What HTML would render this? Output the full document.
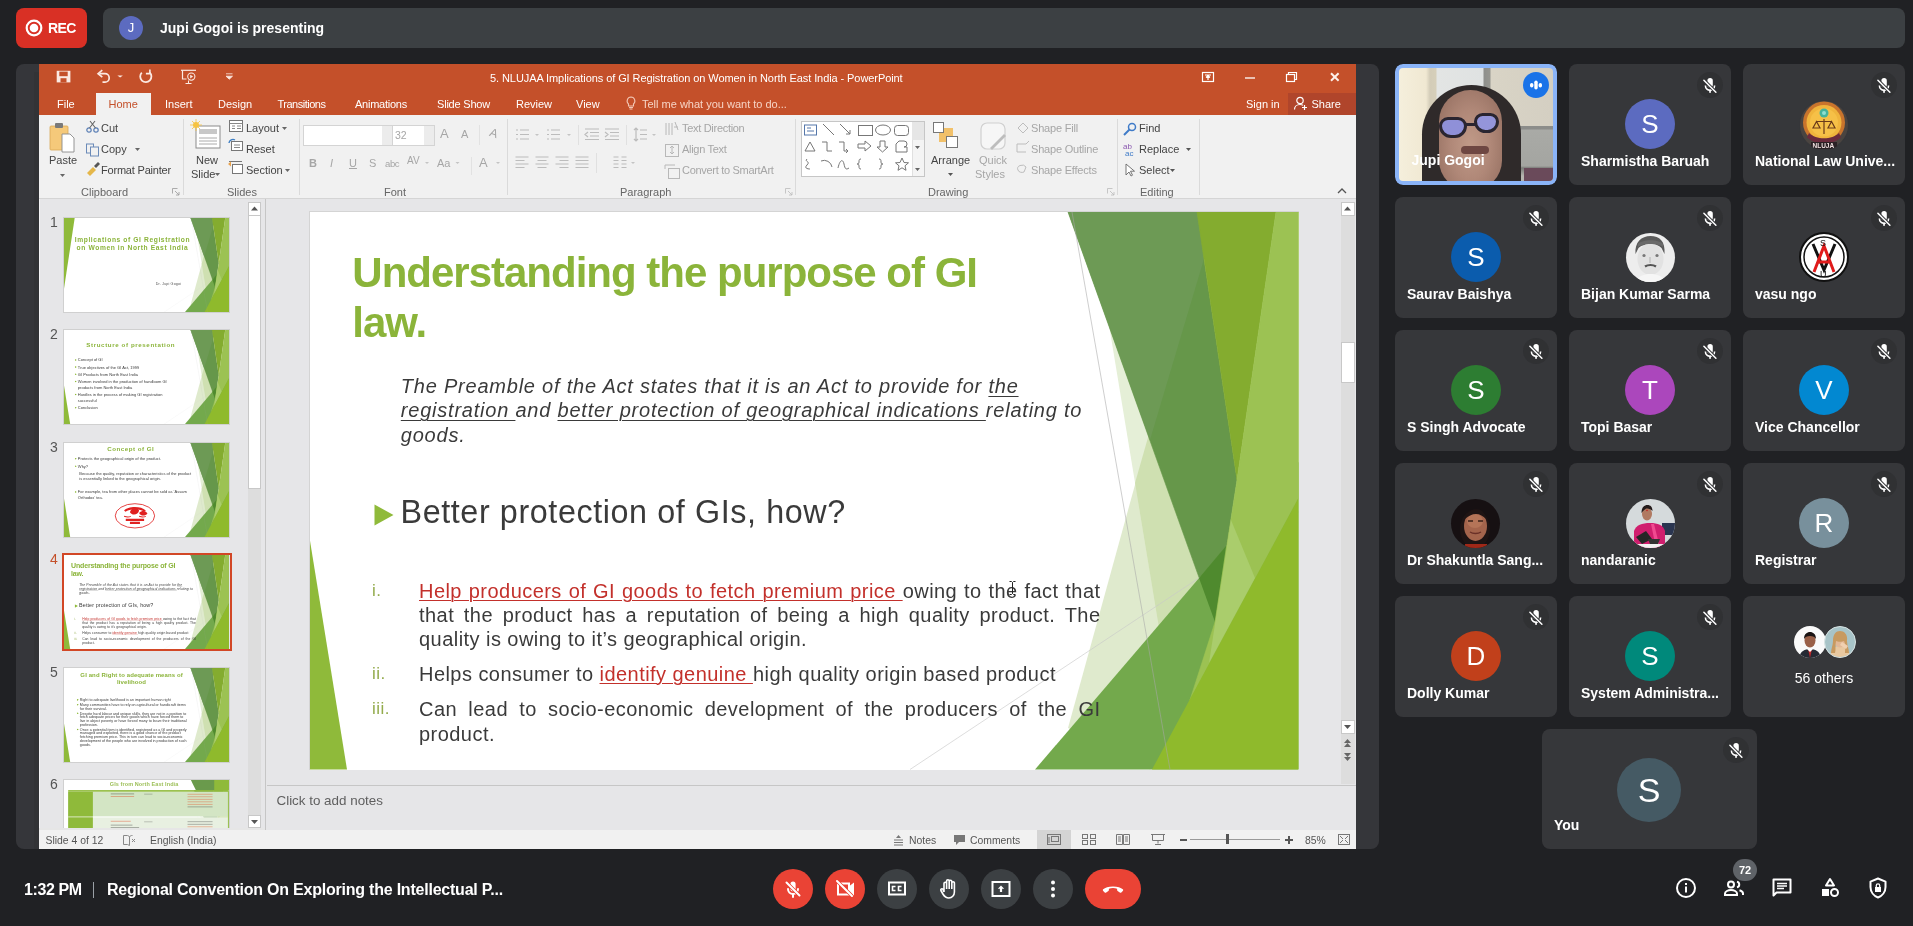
<!DOCTYPE html>
<html><head><meta charset="utf-8">
<style>
*{box-sizing:border-box;margin:0;padding:0}
html,body{width:1913px;height:926px;overflow:hidden;background:#202124;font-family:"Liberation Sans",sans-serif}
body>div,body>svg{will-change:transform}
.a{position:absolute}
#rec{left:16px;top:8px;width:71px;height:40px;background:#d93025;border-radius:8px;color:#fff;font-weight:bold;font-size:14px}
#pres{left:103px;top:8px;width:1802px;height:40px;background:#3c4043;border-radius:8px;color:#fff;font-weight:bold;font-size:14px}
#share{left:16px;top:64px;width:1363px;height:785px;background:#35363a;border-radius:8px;overflow:hidden}
#ppt{left:39px;top:64px;width:1317px;height:785px;background:#e6e6e6;overflow:hidden}
.tile{position:absolute;width:162px;height:121px;background:#36373a;border-radius:8px;overflow:hidden}
.tname{position:absolute;left:12px;bottom:16px;color:#fff;font-weight:bold;font-size:14px;white-space:nowrap}
.av{position:absolute;border-radius:50%;color:#fff;text-align:center;font-size:26px}
.mute{position:absolute;right:8px;top:8px;width:26px;height:26px;border-radius:50%;background:rgba(20,20,22,.18)}

.pt{position:absolute;white-space:nowrap;font-size:11px;color:#fff}
.rt{position:absolute;white-space:nowrap;font-size:11px;color:#444}
.rd{position:absolute;white-space:nowrap;font-size:11px;color:#a6a6a6}
.gl{position:absolute;white-space:nowrap;font-size:11px;color:#666}
.sep{position:absolute;width:1px;background:#dadada}
</style></head>
<body>
<svg width="0" height="0" style="position:absolute">
<defs>
<g id="facetR" stroke-linejoin="round">
 <polygon points="758,516 839,222 930,438 840,557.5" fill="#dfeacd"/>
 <polygon points="799,113 930,438 851,428" fill="#e5efd7"/>
 <polygon points="839,222 825,271 851,428 930,438 890,268" fill="#cfe0b1"/>
 <polygon points="758,0 887,0 927,268 905,410" fill="#66974a" stroke="#66974a" stroke-width="0.6"/>
 <polygon points="758,0 908,0 840,228" fill="#6e9a56" opacity="0.9"/>
 <polygon points="887,0 966,0 927,268" fill="#84ac2f" stroke="#84ac2f" stroke-width="0.6"/>
 <line x1="600" y1="557.5" x2="988.5" y2="300" stroke="#c8c8c8" stroke-width="0.7" opacity="0.9"/>
 <polygon points="725,557.5 988.5,250 988.5,557.5" fill="#73a94c"/>
 <polygon points="889,366 916,334 905,410" fill="#4f8a2e"/>
 <polygon points="966,0 988.5,0 988.5,286 880,488 905,410 927,268" fill="#9cc253" stroke="#9cc253" stroke-width="0.6"/>
 <polygon points="921,308 945,366 899,451" fill="#aacd6c"/>
 <polygon points="842,557.5 988.5,286 988.5,557.5" fill="#8fba2c"/>
 <line x1="762" y1="0" x2="860" y2="557.5" stroke="#a8a8a8" stroke-width="0.7" opacity="0.8"/>
</g>
<g id="facet"><polygon points="0,328.7 0,557.5 37,557.5" fill="#8fba3a"/><use href="#facetR"/></g>
<g id="facet2"><polygon points="0,0 64,0 0,420" fill="#8fba3a"/><use href="#facetR"/></g>
</defs></svg>

<div id="rec" class="a">
 <svg class="a" style="left:9px;top:11px" width="18" height="18" viewBox="0 0 18 18"><circle cx="9" cy="9" r="7.3" fill="none" stroke="#fff" stroke-width="2.2"/><circle cx="9" cy="9" r="4.3" fill="#fff"/></svg>
 <div class="a" style="left:32px;top:12px;font-size:14px;letter-spacing:-0.6px">REC</div>
</div>
<div id="pres" class="a">
 <div class="a" style="left:16px;top:8px;width:24px;height:24px;border-radius:50%;background:#5c6bc0;text-align:center;line-height:24px;font-size:13px;font-weight:normal">J</div>
 <div class="a" style="left:57px;top:12px;font-size:14px">Jupi Gogoi is presenting</div>
</div>
<div id="share" class="a"></div>
<div class="a" style="left:34px;top:72px;width:5px;height:777px;background:#323336"></div>
<div id="ppt" class="a">
<!-- title bar -->
<div class="a" style="left:0;top:0;width:1317px;height:51px;background:#c4502a"></div>
<div class="a" style="left:1249px;top:29px;width:68px;height:22px;background:#b0452b"></div>
<svg class="a" style="left:0;top:0" width="300" height="30" viewBox="0 0 300 30">
 <path d="M17.7 6.8h13.7v11.6H17.7z" fill="#fbe9e2"/><path d="M20.3 7.6h8.4v4.6h-8.4z" fill="#c4502a"/><path d="M21.5 14.2h6v4.2h-6z" fill="#c4502a"/>
 <path d="M60.5 9.7h5.5a4.2 4.2 0 0 1 0 8.4h-2.5" fill="none" stroke="#fbe9e2" stroke-width="1.7"/><path d="M63.3 6.2l-4.2 3.5 4.2 3.5" fill="none" stroke="#fbe9e2" stroke-width="1.7"/>
 <path d="M78.4 11.6h5.5l-2.75 2z" fill="#fbe9e2"/>
 <path d="M110.6 8.4a5.6 5.6 0 1 1-7.8 0.2" fill="none" stroke="#fbe9e2" stroke-width="1.8"/><path d="M110.9 5.6v4h-4" fill="none" stroke="#fbe9e2" stroke-width="1.6"/>
 <path d="M142 6.3h15" stroke="#fbe9e2" stroke-width="1.2"/><path d="M143.5 6.5v8.5h4" fill="none" stroke="#fbe9e2" stroke-width="1.2"/><circle cx="152.3" cy="12.6" r="3.6" fill="none" stroke="#fbe9e2" stroke-width="1.1"/><path d="M151.2 10.8v3.6l2.9-1.8z" fill="#fbe9e2"/><path d="M149.5 16.5v3M146.5 19.5h6" stroke="#fbe9e2" stroke-width="1"/>
 <path d="M187 9.8h6.5M187 12.2h6.5l-3.25 3z" fill="#fbe9e2" stroke="#fbe9e2" stroke-width="0.8"/>
</svg>
<div class="pt" style="left:451px;top:8px;font-size:11px;letter-spacing:-0.08px">5. NLUJAA Implications of GI Registration on Women in North East India - PowerPoint</div>
<svg class="a" style="left:1150px;top:0" width="167" height="30" viewBox="0 0 167 30">
 <g fill="none" stroke="#fff" stroke-width="1.2"><rect x="13.5" y="8.5" width="11" height="9"/><path d="M16 11h6M19 16v-4M17 13.5l2-2 2 2"/></g>
 <path d="M56 14h10" stroke="#fff" stroke-width="1.3"/>
 <g fill="none" stroke="#fff" stroke-width="1.2"><rect x="97.5" y="10.5" width="8" height="7"/><path d="M99.5 10.5v-2h8v7h-2"/></g>
 <path d="M142 9.2l7.6 7.6M149.6 9.2l-7.6 7.6" stroke="#fdf0ea" stroke-width="2"/>
</svg>
<!-- tabs -->
<div class="a" style="left:57px;top:29px;width:55px;height:23px;background:#f1f1f1"></div>
<div class="pt" style="left:18px;top:34px">File</div>
<div class="pt" style="left:69.5px;top:34px;color:#c4502a">Home</div>
<div class="pt" style="left:126px;top:34px">Insert</div>
<div class="pt" style="left:179px;top:34px">Design</div>
<div class="pt" style="left:238.5px;top:34px;letter-spacing:-0.5px">Transitions</div>
<div class="pt" style="left:316px;top:34px;letter-spacing:-0.25px">Animations</div>
<div class="pt" style="left:398px;top:34px;letter-spacing:-0.2px">Slide Show</div>
<div class="pt" style="left:477px;top:34px">Review</div>
<div class="pt" style="left:537px;top:34px">View</div>
<svg class="a" style="left:585px;top:31px" width="14" height="16"><path d="M7 2a4 4 0 0 0-2.5 7v2h5V9A4 4 0 0 0 7 2zM5 12.5h4M5.5 14h3" fill="none" stroke="#f3c6b4" stroke-width="1.1"/></svg>
<div class="pt" style="left:603px;top:34px;color:#f6d3c5;letter-spacing:0px">Tell me what you want to do...</div>
<div class="pt" style="left:1207px;top:34px">Sign in</div>
<svg class="a" style="left:1254px;top:31px" width="16" height="16"><circle cx="7" cy="5.5" r="3.2" fill="none" stroke="#fff" stroke-width="1.2"/><path d="M1.5 14.5c0-3 2.5-5 5.5-5 1.2 0 2.2.3 3 .8M11.5 10v5M9 12.5h5" fill="none" stroke="#fff" stroke-width="1.2"/></svg>
<div class="pt" style="left:1272.5px;top:34px">Share</div>
<!-- ribbon -->
<div class="a" style="left:0;top:51px;width:1317px;height:84px;background:#f1f1f1;border-bottom:1px solid #d5d5d5"></div>
<div id="ribbon" class="a" style="left:0;top:51px;width:1317px;height:84px">
<!-- Clipboard -->
<svg class="a" style="left:8px;top:5px" width="32" height="62" viewBox="0 0 32 62">
 <rect x="3" y="6" width="18" height="24" rx="1" fill="#f5c97a" stroke="#d9a857" stroke-width="0.8"/>
 <rect x="8" y="3" width="8" height="5" rx="1" fill="#7a7a7a"/>
 <path d="M15 14h8l4 4v14H15z" fill="#fff" stroke="#8a8a8a" stroke-width="0.9"/>
 <path d="M13 54h5l-2.5 3z" fill="#666"/>
</svg>
<div class="rt" style="left:10px;top:39px">Paste</div>
<svg class="a" style="left:46px;top:5px" width="16" height="60" viewBox="0 0 16 60">
 <g fill="none" stroke="#5b7fb5" stroke-width="1.2"><circle cx="4" cy="10" r="2.2"/><circle cx="11" cy="10" r="2.2"/></g><path d="M4.5 8L10 1M10.5 8L5 1" stroke="#666" stroke-width="1.1"/>
 <g fill="none" stroke="#6a8ab8" stroke-width="1"><rect x="1.5" y="24" width="7" height="9"/><rect x="5.5" y="27" width="8" height="9" fill="#f1f1f1"/></g>
 <path d="M2 53l6-6 3 3-6 6z" fill="#e5b74a"/><path d="M9 46l4-4 2 2-4 4z" fill="#555"/>
</svg>
<div class="rt" style="left:62px;top:7px">Cut</div>
<div class="rt" style="left:62px;top:28px">Copy</div>
<svg class="a" style="left:96px;top:33px" width="6" height="4"><path d="M0 0h5l-2.5 3z" fill="#666"/></svg>
<div class="rt" style="left:62px;top:49px;letter-spacing:-0.2px">Format Painter</div>
<div class="gl" style="left:42px;top:71px">Clipboard</div>
<svg class="a" style="left:133px;top:73px" width="8" height="8"><path d="M0.5 0.5h5M0.5 0.5v5M3 3l4 4M7 4v3h-3" fill="none" stroke="#999" stroke-width="0.8"/></svg>
<div class="sep" style="left:144px;top:4px;height:76px"></div>
<!-- Slides -->
<svg class="a" style="left:151px;top:4px" width="32" height="34" viewBox="0 0 32 34">
 <rect x="6" y="7" width="24" height="22" fill="#fff" stroke="#8c8c8c"/><rect x="9" y="10" width="18" height="5" fill="#c8c8c8"/><path d="M9 19h18M9 22h18M9 25h18" stroke="#aaa"/>
 <circle cx="6" cy="6" r="3" fill="#f6c343"/><path d="M6 0v12M0 6h12M2 2l8 8M10 2l-8 8" stroke="#f6c343" stroke-width="0.8"/>
</svg>
<div class="rt" style="left:157px;top:39px">New</div>
<div class="rt" style="left:152px;top:53px">Slide</div>
<svg class="a" style="left:176px;top:58px" width="6" height="4"><path d="M0 0h5l-2.5 3z" fill="#666"/></svg>
<svg class="a" style="left:189px;top:3px" width="16" height="60" viewBox="0 0 16 60">
 <rect x="1.5" y="2.5" width="13" height="11" fill="#fff" stroke="#777"/><path d="M1.5 5.5h13M4 8h3M4 10.5h3M9 8h4M9 10.5h4" stroke="#888"/>
 <rect x="3.5" y="23.5" width="11" height="9" fill="#fff" stroke="#777"/><path d="M1 25a4 4 0 0 1 6-3" fill="none" stroke="#3e7fc4" stroke-width="1.4"/><path d="M6 27h6M6 29.5h6" stroke="#888"/>
 <rect x="4.5" y="46.5" width="10" height="9" fill="#fff" stroke="#777"/><path d="M1 43.5h13" stroke="#777"/><path d="M0 46l3-2.5v5z" fill="#e8a04a"/>
</svg>
<div class="rt" style="left:207px;top:7px">Layout</div><svg class="a" style="left:243px;top:12px" width="6" height="4"><path d="M0 0h5l-2.5 3z" fill="#666"/></svg>
<div class="rt" style="left:207px;top:28px">Reset</div>
<div class="rt" style="left:207px;top:49px">Section</div><svg class="a" style="left:246px;top:54px" width="6" height="4"><path d="M0 0h5l-2.5 3z" fill="#666"/></svg>
<div class="gl" style="left:188px;top:71px">Slides</div>
<div class="sep" style="left:260px;top:4px;height:76px"></div>
<!-- Font -->
<div class="a" style="left:264px;top:10px;width:90px;height:21px;background:#fff;border:1px solid #d4d4d4"></div>
<div class="a" style="left:343px;top:11px;width:10px;height:19px;background:#ececec"></div>
<div class="a" style="left:353px;top:10px;width:43px;height:21px;background:#fff;border:1px solid #d4d4d4"></div>
<div class="a" style="left:385px;top:11px;width:10px;height:19px;background:#ececec"></div>
<div class="rd" style="left:356px;top:14px;font-size:10.5px">32</div>
<div class="rd" style="left:401px;top:11px;font-size:13px">A</div><div class="rd" style="left:422px;top:13px;font-size:11px">A</div>
<div class="sep" style="left:440px;top:10px;height:20px;background:#e2e2e2"></div>
<div class="rd" style="left:451px;top:11px;font-size:12px;transform:rotate(20deg)">A</div>
<div class="rd" style="left:270px;top:42px;font-weight:bold;font-size:11px">B</div>
<div class="rd" style="left:291px;top:42px;font-style:italic;font-size:11px">I</div>
<div class="rd" style="left:310px;top:42px;text-decoration:underline;font-size:11px">U</div>
<div class="rd" style="left:330px;top:42px;font-size:11px">S</div>
<div class="rd" style="left:346px;top:43px;font-size:9.5px;letter-spacing:-0.4px">abc</div>
<div class="rd" style="left:368px;top:40px;font-size:10px">AV</div>
<div class="rd" style="left:398px;top:42px;font-size:11px">Aa</div>
<div class="sep" style="left:432px;top:42px;height:18px;background:#e2e2e2"></div>
<div class="rd" style="left:440px;top:40px;font-size:13px">A</div><svg class="a" style="left:386px;top:47px" width="76" height="4"><path d="M0 0h4l-2 2zM30.5 0h4l-2 2zM71 0h4l-2 2z" fill="#c4c4c4"/></svg>
<div class="gl" style="left:345px;top:71px">Font</div>
<div class="sep" style="left:468px;top:4px;height:76px"></div>
<!-- Paragraph -->
<svg class="a" style="left:474px;top:6px" width="160" height="60" viewBox="0 0 160 60" fill="none" stroke="#bcbcbc" stroke-width="1.2">
 <path d="M7 9h9M7 13.5h9M7 18h9M3 9h2M3 13.5h2M3 18h2"/>
 <path d="M38 9h9M38 13.5h9M38 18h9M34 9h2M34 13.5h2M34 18h2"/>
 <path d="M72 8h14M77 11.5h9M77 15h9M72 18.5h14M75 11l-3 2.5 3 2.5"/>
 <path d="M92 8h14M97 11.5h9M97 15h9M92 18.5h14M92 11l3 2.5-3 2.5"/>
 <path d="M123 7v13M121 9l2-2 2 2M121 18l2 2 2-2M127 9h7M127 13.5h7M127 18h7"/>
 <path d="M2.5 36h13M2.5 39.5h9M2.5 43h13M2.5 46.5h9"/>
 <path d="M22.5 36h13M24.5 39.5h9M22.5 43h13M24.5 46.5h9"/>
 <path d="M42.5 36h13M46.5 39.5h9M42.5 43h13M46.5 46.5h9"/>
 <path d="M62.5 36h13M62.5 39.5h13M62.5 43h13M62.5 46.5h13"/>
 <path d="M100.5 36h5M100.5 39.5h5M100.5 43h5M100.5 46.5h5M108.5 36h5M108.5 39.5h5M108.5 43h5M108.5 46.5h5"/>
 <path d="M22 13h4l-2 2zM54 13h4l-2 2zM139 13h4l-2 2zM118 41h4l-2 2z" fill="#c4c4c4" stroke="none"/>
</svg>
<div class="sep" style="left:539px;top:10px;height:20px;background:#e0e0e0"></div>
<div class="sep" style="left:587px;top:10px;height:20px;background:#e0e0e0"></div>
<div class="sep" style="left:557px;top:38px;height:20px;background:#e0e0e0"></div>
<div class="rd" style="left:643px;top:7px;letter-spacing:-0.3px">Text Direction</div>
<div class="rd" style="left:643px;top:28px;letter-spacing:-0.3px">Align Text</div>
<div class="rd" style="left:643px;top:49px;letter-spacing:-0.3px">Convert to SmartArt</div>
<svg class="a" style="left:624px;top:4px" width="18" height="60" fill="none" stroke="#b8b8b8" stroke-width="1">
 <path d="M3 4v12M6 4v12M9 4v12M12 3l3 8M11 8h4"/><rect x="2.5" y="25.5" width="13" height="12"/><path d="M9 27v8M7 29l2-2 2 2M7 33l2 2 2-2"/>
 <rect x="5.5" y="49.5" width="11" height="10"/><path d="M2 46h10M2 46v4"/>
</svg>
<div class="gl" style="left:581px;top:71px">Paragraph</div>
<svg class="a" style="left:746px;top:73px" width="8" height="8"><path d="M0.5 0.5h5M0.5 0.5v5M3 3l4 4M7 4v3h-3" fill="none" stroke="#bbb" stroke-width="0.8"/></svg>
<div class="sep" style="left:756px;top:4px;height:76px"></div>
<!-- Drawing -->
<div class="a" style="left:762px;top:6px;width:124px;height:56px;background:#fff;border:1px solid #c6c6c6"></div>
<div class="a" style="left:873px;top:7px;width:12px;height:54px;background:#f4f4f4;border-left:1px solid #e0e0e0"></div>
<div class="a" style="left:873px;top:7px;width:12px;height:18px;background:#e6e6e6"></div>
<svg class="a" style="left:762px;top:6px" width="124" height="56" viewBox="0 0 124 56" fill="none" stroke="#777" stroke-width="1">
 <rect x="3.5" y="4" width="12" height="10" stroke="#5577aa"/><path d="M6 7h4M6 10h7" stroke="#5577aa"/>
 <path d="M22 3l11 11M39 3l10 10M49 13v-4M49 13h-4"/>
 <rect x="57.5" y="4.5" width="14" height="10"/><ellipse cx="82" cy="9" rx="7.5" ry="5"/><rect x="93.5" y="4.5" width="14" height="10" rx="3"/>
 <path d="M4 30l5-9 5 9z"/><path d="M21 21h5v9h5"/><path d="M38 21h5v9h4M45 28l2 2-2 2"/>
 <path d="M57 23h7v-3l6 5-6 5v-3h-7z"/><path d="M79 20h5v6h3l-5.5 5-5.5-5h3z"/><path d="M95 31v-8l3-3h5a3 3 0 0 1 0 6h3v5z"/>
 <path d="M6 38c-3 3 4 2 0 6s3 4 3 4"/><path d="M20 40a8 8 0 0 1 11 6"/><path d="M37 47c2-9 5-9 6-4s2 6 5 4"/>
 <path d="M60 38c-2 0-2 1-2 3s-1 2-2 2c1 0 2 0 2 2s0 3 2 3"/><path d="M78 38c2 0 2 1 2 3s1 2 2 2c-1 0-2 0-2 2s0 3-2 3"/>
 <path d="M101 37l2 4.5 4.5.3-3.5 3 1 4.5-4-2.5-4 2.5 1-4.5-3.5-3 4.5-.3z"/>
 <path d="M114 25h5l-2.5 3zM114 45h5M114 47h5l-2.5 3z" fill="#666" stroke="none"/>
</svg>
<svg class="a" style="left:891px;top:5px" width="34" height="34" viewBox="0 0 34 34">
 <rect x="9" y="8" width="14" height="14" fill="#f2c16a"/><rect x="3.5" y="2.5" width="10" height="10" fill="#fff" stroke="#777"/><rect x="16.5" y="16.5" width="11" height="11" fill="#fff" stroke="#777"/>
</svg>
<div class="rt" style="left:892px;top:39px">Arrange</div>
<svg class="a" style="left:909px;top:58px" width="6" height="4"><path d="M0 0h5l-2.5 3z" fill="#555"/></svg>
<svg class="a" style="left:939px;top:5px" width="32" height="34" viewBox="0 0 32 34"><rect x="3" y="3" width="24" height="26" rx="6" fill="#f6f6f6" stroke="#d0d0d0" stroke-width="1.2"/><path d="M12 28l14-14 2 2-14 14z" fill="#bdbdbd"/></svg>
<div class="rd" style="left:940px;top:39px">Quick</div>
<div class="rd" style="left:936px;top:53px">Styles</div>
<svg class="a" style="left:975px;top:3px" width="18" height="62" fill="none" stroke="#bdbdbd" stroke-width="1">
 <path d="M4 10l5-5 5 5-5 5z"/><path d="M3 26h9l3-3M3 26v8h9" /><path d="M4 52a4 3 0 0 1 8-3l-2 5a4 3 0 0 1-6-2z"/>
</svg>
<div class="rd" style="left:992px;top:7px;letter-spacing:-0.2px">Shape Fill</div>
<div class="rd" style="left:992px;top:28px;letter-spacing:-0.2px">Shape Outline</div>
<div class="rd" style="left:992px;top:49px;letter-spacing:-0.2px">Shape Effects</div>
<div class="gl" style="left:889px;top:71px">Drawing</div>
<svg class="a" style="left:1068px;top:73px" width="8" height="8"><path d="M0.5 0.5h5M0.5 0.5v5M3 3l4 4M7 4v3h-3" fill="none" stroke="#bbb" stroke-width="0.8"/></svg>
<div class="sep" style="left:1078px;top:4px;height:76px"></div>
<!-- Editing -->
<svg class="a" style="left:1082px;top:5px" width="18" height="60" viewBox="0 0 18 60">
 <circle cx="11" cy="7" r="3.5" fill="none" stroke="#3f7bc8" stroke-width="1.5"/><path d="M8.5 9.5L3 15" stroke="#3f7bc8" stroke-width="2"/>
 <text x="2" y="29" font-size="8" fill="#8a58b0" font-family="Liberation Sans">ab</text><text x="4" y="36" font-size="8" fill="#3f7bc8" font-family="Liberation Sans">ac</text>
 <path d="M5 44v11l3-3 2 4 1.5-.8-2-4h4z" fill="#fff" stroke="#666" stroke-width="0.9"/>
</svg>
<div class="rt" style="left:1100px;top:7px">Find</div>
<div class="rt" style="left:1100px;top:28px">Replace</div><svg class="a" style="left:1147px;top:33px" width="6" height="4"><path d="M0 0h5l-2.5 3z" fill="#555"/></svg>
<div class="rt" style="left:1100px;top:49px">Select</div><svg class="a" style="left:1131px;top:54px" width="6" height="4"><path d="M0 0h5l-2.5 3z" fill="#555"/></svg>
<div class="gl" style="left:1101px;top:71px">Editing</div>
<div class="sep" style="left:1160px;top:4px;height:76px"></div>
<svg class="a" style="left:1298px;top:72px" width="10" height="8"><path d="M1 6l4-4 4 4" fill="none" stroke="#555" stroke-width="1.3"/></svg>
</div>

<!-- main area -->
<div class="a" style="left:0;top:135px;width:1317px;height:631px;background:#e6e6e8"></div>
<div class="a" style="left:226px;top:135px;width:1px;height:631px;background:#c6c6c6"></div><div class="a" style="left:0;top:135px;width:1px;height:631px;background:#f3f3f5"></div>
<!-- thumbnail scrollbar -->
<div class="a" style="left:209px;top:138px;width:13px;height:626px;background:#dddddd"></div>
<div class="a" style="left:209px;top:138px;width:13px;height:14px;background:#fff;border:1px solid #c8c8c8"></div>
<svg class="a" style="left:212px;top:142px" width="8" height="5"><path d="M0 4.5h7l-3.5-4z" fill="#555"/></svg>
<div class="a" style="left:209px;top:152px;width:13px;height:273px;background:#fff;border:1px solid #c8c8c8;border-top:none"></div>
<div class="a" style="left:209px;top:751px;width:13px;height:13px;background:#fff;border:1px solid #c8c8c8"></div>
<svg class="a" style="left:212px;top:756px" width="8" height="5"><path d="M0 0h7l-3.5 4z" fill="#555"/></svg>
<!-- thumbs -->
<div id="thumbs"><div class="rt" style="left:11px;top:150px;font-size:14px;color:#555">1</div><div class="a" style="left:24px;top:153px;width:167px;height:96px;background:#d0d0d0"></div><div class="a" style="left:25px;top:154px;width:165px;height:94px;overflow:hidden;background:#fff"><div class="a" style="left:0;top:0;width:988.5px;height:557.5px;transform:scale(0.16692,0.16861);transform-origin:0 0"><svg class="a" style="left:0;top:0" width="988.5" height="557.5" viewBox="0 0 988.5 557.5"><use href="#facet2"/></svg><div class="a" style="left:20px;top:101px;width:780px;text-align:center;font-size:40px;font-weight:bold;color:#8bb43a;line-height:50px;white-space:nowrap;letter-spacing:3.6px">Implications of GI Registration<br>on Women in North East India</div><div class="a" style="left:549px;top:380px;font-size:22px;color:#555;white-space:nowrap;letter-spacing:1px">Dr. Jupi Gogoi</div></div></div><div class="rt" style="left:11px;top:262px;font-size:14px;color:#555">2</div><div class="a" style="left:24px;top:265px;width:167px;height:96px;background:#d0d0d0"></div><div class="a" style="left:25px;top:266px;width:165px;height:94px;overflow:hidden;background:#fff"><div class="a" style="left:0;top:0;width:988.5px;height:557.5px;transform:scale(0.16692,0.16861);transform-origin:0 0"><svg class="a" style="left:0;top:0" width="988.5" height="557.5" viewBox="0 0 988.5 557.5"><use href="#facet"/></svg><div class="a" style="left:100px;top:70px;width:600px;text-align:center;font-size:37px;font-weight:bold;color:#8bb43a;white-space:nowrap;letter-spacing:3.6px">Structure of presentation</div><svg class="a" style="left:65px;top:171.75px" width="12" height="12"><path d="M0 0L12 6L0 12z" fill="#8fba3a"/></svg><div class="a" style="left:83px;top:160px;width:590px;font-size:24px;line-height:35.5px;color:#3a3a3a">Concept of GI</div><svg class="a" style="left:65px;top:214.25px" width="12" height="12"><path d="M0 0L12 6L0 12z" fill="#8fba3a"/></svg><div class="a" style="left:83px;top:202.5px;width:590px;font-size:24px;line-height:35.5px;color:#3a3a3a">True objectives of the GI Act, 1999</div><svg class="a" style="left:65px;top:256.75px" width="12" height="12"><path d="M0 0L12 6L0 12z" fill="#8fba3a"/></svg><div class="a" style="left:83px;top:245.0px;width:590px;font-size:24px;line-height:35.5px;color:#3a3a3a">GI Products from North East India</div><svg class="a" style="left:65px;top:299.25px" width="12" height="12"><path d="M0 0L12 6L0 12z" fill="#8fba3a"/></svg><div class="a" style="left:83px;top:287.5px;width:590px;font-size:24px;line-height:35.5px;color:#3a3a3a">Women involved in the production of handloom GI products from North East India</div><svg class="a" style="left:65px;top:377.25px" width="12" height="12"><path d="M0 0L12 6L0 12z" fill="#8fba3a"/></svg><div class="a" style="left:83px;top:365.5px;width:590px;font-size:24px;line-height:35.5px;color:#3a3a3a">Hurdles in the process of making GI registration successful</div><svg class="a" style="left:65px;top:455.25px" width="12" height="12"><path d="M0 0L12 6L0 12z" fill="#8fba3a"/></svg><div class="a" style="left:83px;top:443.5px;width:590px;font-size:24px;line-height:35.5px;color:#3a3a3a">Conclusion</div></div></div><div class="rt" style="left:11px;top:374.5px;font-size:14px;color:#555">3</div><div class="a" style="left:24px;top:377.5px;width:167px;height:96px;background:#d0d0d0"></div><div class="a" style="left:25px;top:378.5px;width:165px;height:94px;overflow:hidden;background:#fff"><div class="a" style="left:0;top:0;width:988.5px;height:557.5px;transform:scale(0.16692,0.16861);transform-origin:0 0"><svg class="a" style="left:0;top:0" width="988.5" height="557.5" viewBox="0 0 988.5 557.5"><use href="#facet"/></svg><div class="a" style="left:150px;top:14px;width:500px;text-align:center;font-size:37px;font-weight:bold;color:#8bb43a;white-space:nowrap;letter-spacing:3px">Concept of GI</div><svg class="a" style="left:65px;top:87.0px" width="12" height="12"><path d="M0 0L12 6L0 12z" fill="#8fba3a"/></svg><div class="a" style="left:83px;top:76px;width:680px;font-size:24px;line-height:34px;color:#3a3a3a">Protects the geographical origin of the product.</div><svg class="a" style="left:65px;top:132.0px" width="12" height="12"><path d="M0 0L12 6L0 12z" fill="#8fba3a"/></svg><div class="a" style="left:83px;top:121px;width:680px;font-size:24px;line-height:34px;color:#3a3a3a">Why?</div><div class="a" style="left:92px;top:163px;width:680px;font-size:24px;line-height:33.5px;color:#3a3a3a">Because the quality, reputation or characteristics of the product is essentially linked to the geographical origin.</div><svg class="a" style="left:65px;top:284.0px" width="12" height="12"><path d="M0 0L12 6L0 12z" fill="#8fba3a"/></svg><div class="a" style="left:83px;top:273px;width:680px;font-size:24px;line-height:34px;color:#3a3a3a">For example, tea from other places cannot be sold as ‘Assam Orthodox’ tea.</div><svg class="a" style="left:300px;top:355px" width="250" height="155" viewBox="0 0 250 155"><ellipse cx="125" cy="77" rx="118" ry="72" fill="#fff" stroke="#e02020" stroke-width="5"/><path d="M60 45c20-25 100-30 130 0l-8 8c-25-20-90-20-114 0z" fill="#e02020"/><path d="M95 55c10-30 40-30 55-10c-5 25-40 35-55 10z" fill="#e02020"/><path d="M150 60c20-20 45-10 50 5c-15 15-40 15-50-5z" fill="#e02020"/><path d="M70 95h110v12H70zM95 112h60v14H95z" fill="#e02020"/><path d="M60 80c15 5 30 5 40 0M150 80c15 5 30 5 40 0" stroke="#e02020" stroke-width="6" fill="none"/></svg></div></div><div class="rt" style="left:11px;top:487px;font-size:14px;color:#c4502a">4</div><div class="a" style="left:22.7px;top:489px;width:170.3px;height:98.4px;border:2.5px solid #d24726"></div><div class="a" style="left:25px;top:491px;width:165px;height:94px;overflow:hidden;background:#fff"><div class="a" style="left:0;top:0;width:988.5px;height:557.5px;transform:scale(0.16692,0.16861);transform-origin:0 0"><svg class="a" style="left:0;top:0" width="988.5" height="557.5" viewBox="0 0 988.5 557.5"><use href="#facet"/></svg><div style="position:absolute;left:42.3px;font-size:42px;font-weight:bold;color:#8bb43a;line-height:50px;white-space:nowrap;letter-spacing:-1.0px;top:36.2px">Understanding the purpose of GI</div><div style="position:absolute;left:42.3px;font-size:42px;font-weight:bold;color:#8bb43a;line-height:50px;white-space:nowrap;letter-spacing:-1.0px;top:85.5px">law.</div><div style="position:absolute;left:90.8px;font-size:20px;font-style:italic;color:#3a3a3a;line-height:24px;white-space:nowrap;letter-spacing:0.78px;top:161.72px">The Preamble of the Act states that it is an Act to provide for <span style="text-decoration:underline;text-underline-offset:3px;text-decoration-thickness:1px">the</span></div><div style="position:absolute;left:90.8px;font-size:20px;font-style:italic;color:#3a3a3a;line-height:24px;white-space:nowrap;letter-spacing:0.78px;top:186.22px"><span style="text-decoration:underline;text-underline-offset:3px;text-decoration-thickness:1px">registration </span>and <span style="text-decoration:underline;text-underline-offset:3px;text-decoration-thickness:1px">better protection of geographical indications </span>relating to</div><div style="position:absolute;left:90.8px;font-size:20px;font-style:italic;color:#3a3a3a;line-height:24px;white-space:nowrap;letter-spacing:0.78px;top:210.82px">goods.</div><svg class="a" style="left:64px;top:291.5px" width="20" height="22"><path d="M0.5 0.5L19.5 11L0.5 21.5z" fill="#8fba3a"/></svg><div class="a" style="left:90.5px;top:282.4px;font-size:32.3px;color:#3a3a3a;line-height:36px;white-space:nowrap;letter-spacing:0.6px">Better protection of GIs, how?</div><div class="a" style="left:62px;top:366.80px;font-size:17px;line-height:24px;color:#93ab4c;letter-spacing:0.5px">i.</div><div style="position:absolute;left:109px;width:681.5px;font-size:20px;line-height:24px;white-space:nowrap;letter-spacing:0.455px;color:#3a3a3a;top:366.80px;text-align:justify;text-align-last:justify;white-space:normal"><span style="color:#c3302b;text-decoration:underline;text-underline-offset:2px;text-decoration-thickness:1px">Help producers of GI goods to fetch premium price </span>owing to the fact that</div><div style="position:absolute;left:109px;width:681.5px;font-size:20px;line-height:24px;white-space:nowrap;letter-spacing:0.455px;color:#3a3a3a;top:390.80px;text-align:justify;text-align-last:justify;white-space:normal">that the product has a reputation of being a high quality product. The</div><div style="position:absolute;left:109px;width:681.5px;font-size:20px;line-height:24px;white-space:nowrap;letter-spacing:0.455px;color:#3a3a3a;top:414.90px;">quality is owing to it’s geographical origin.</div><div class="a" style="left:62px;top:450.20px;font-size:17px;line-height:24px;color:#93ab4c;letter-spacing:0.5px">ii.</div><div style="position:absolute;left:109px;width:681.5px;font-size:20px;line-height:24px;white-space:nowrap;letter-spacing:0.455px;color:#3a3a3a;top:450.20px;">Helps consumer to <span style="color:#c3302b;text-decoration:underline;text-underline-offset:2px;text-decoration-thickness:1px">identify genuine </span>high quality origin based product</div><div class="a" style="left:62px;top:485.30px;font-size:17px;line-height:24px;color:#93ab4c;letter-spacing:0.5px">iii.</div><div style="position:absolute;left:109px;width:681.5px;font-size:20px;line-height:24px;white-space:nowrap;letter-spacing:0.455px;color:#3a3a3a;top:485.30px;text-align:justify;text-align-last:justify;white-space:normal">Can lead to socio-economic development of the producers of the GI</div><div style="position:absolute;left:109px;width:681.5px;font-size:20px;line-height:24px;white-space:nowrap;letter-spacing:0.455px;color:#3a3a3a;top:509.80px;">product.</div><svg class="a" style="left:699px;top:369px" width="7" height="14"><path d="M0.5 0.5h2l1 1 1-1h2M3.5 1.5v11M0.5 13.5h2l1-1 1 1h2" fill="none" stroke="#222" stroke-width="1"/></svg></div></div><div class="rt" style="left:11px;top:599.5px;font-size:14px;color:#555">5</div><div class="a" style="left:24px;top:602.5px;width:167px;height:96px;background:#d0d0d0"></div><div class="a" style="left:25px;top:603.5px;width:165px;height:94px;overflow:hidden;background:#fff"><div class="a" style="left:0;top:0;width:988.5px;height:557.5px;transform:scale(0.16692,0.16861);transform-origin:0 0"><svg class="a" style="left:0;top:0" width="988.5" height="557.5" viewBox="0 0 988.5 557.5"><use href="#facet"/></svg><div class="a" style="left:60px;top:16px;width:690px;text-align:center;font-size:36px;font-weight:bold;color:#8bb43a;line-height:45px;letter-spacing:0.6px">GI and Right to adequate means of livelihood</div><svg class="a" style="left:77px;top:183.25px" width="12" height="12"><path d="M0 0L12 6L0 12z" fill="#8fba3a"/></svg><div class="a" style="left:95px;top:178px;width:640px;font-size:22px;line-height:22.5px;color:#3a3a3a">Right to adequate livelihood is an important human right</div><svg class="a" style="left:77px;top:211.75px" width="12" height="12"><path d="M0 0L12 6L0 12z" fill="#8fba3a"/></svg><div class="a" style="left:95px;top:206.5px;width:640px;font-size:22px;line-height:22.5px;color:#3a3a3a">Many communities have to rely on agricultural or handicraft items for their survival.</div><svg class="a" style="left:77px;top:262.75px" width="12" height="12"><path d="M0 0L12 6L0 12z" fill="#8fba3a"/></svg><div class="a" style="left:95px;top:257.5px;width:640px;font-size:22px;line-height:22.5px;color:#3a3a3a">Despite hard labour and unique skills, they are not in a position to fetch adequate prices for their goods which have forced them to live in abject poverty or have forced many to leave their traditional profession.</div><svg class="a" style="left:77px;top:358.75px" width="12" height="12"><path d="M0 0L12 6L0 12z" fill="#8fba3a"/></svg><div class="a" style="left:95px;top:353.5px;width:640px;font-size:22px;line-height:22.5px;color:#3a3a3a">Once a potential item is identified, registered as a GI and properly managed and exploited, there is a good chance of the product fetching premium price. This in turn can lead to socio-economic development of the people who are involved in production of such goods.</div></div></div><div class="rt" style="left:11px;top:712px;font-size:14px;color:#555">6</div><div class="a" style="left:24px;top:715px;width:167px;height:96px;background:#d0d0d0"></div><div class="a" style="left:25px;top:716px;width:165px;height:94px;overflow:hidden;background:#fff"><div class="a" style="left:0;top:0;width:988.5px;height:557.5px;transform:scale(0.16692,0.16861);transform-origin:0 0"><svg class="a" style="left:0;top:0" width="988.5" height="557.5" viewBox="0 0 988.5 557.5"><use href="#facet"/></svg><div class="a" style="left:0;top:0;width:988.5px;height:60px;background:#fff"></div><svg class="a" style="left:0;top:0" width="988.5" height="60"><polygon points="760,0 988.5,0 988.5,60 790,60" fill="#6a9a4c"/><polygon points="900,0 988.5,0 988.5,60 900,60" fill="#8fba3a"/></svg><div class="a" style="left:230px;top:8px;width:500px;text-align:center;font-size:33px;font-weight:bold;color:#8bb43a;letter-spacing:0.5px;opacity:.85">GIs from North East India</div><div class="a" style="left:25px;top:60px;width:957px;height:10px;background:#8fba3a"></div><div class="a" style="left:25px;top:70px;width:957px;height:147px;background:#d3e5c4"></div><div class="a" style="left:25px;top:221px;width:957px;height:340px;background:#e8f0e1"></div><div class="a" style="left:25px;top:70px;width:148px;height:490px;background:#8fba3a"></div><div class="a" style="left:25px;top:217px;width:957px;height:4px;background:#fff"></div><div class="a" style="left:280px;top:80px;width:140px;height:5px;background:#333;opacity:.45"></div><div class="a" style="left:280px;top:95px;width:140px;height:5px;background:#e0401a;opacity:.45"></div><div class="a" style="left:280px;top:242px;width:120px;height:5px;background:#e0401a;opacity:.45"></div><div class="a" style="left:280px;top:265px;width:130px;height:5px;background:#333;opacity:.45"></div><div class="a" style="left:280px;top:280px;width:170px;height:5px;background:#333;opacity:.45"></div><div class="a" style="left:280px;top:295px;width:100px;height:5px;background:#333;opacity:.45"></div><div class="a" style="left:740px;top:82px;width:150px;height:5px;background:#e0401a;opacity:.4"></div><div class="a" style="left:740px;top:97px;width:150px;height:5px;background:#e0401a;opacity:.4"></div><div class="a" style="left:740px;top:112px;width:150px;height:5px;background:#e0401a;opacity:.4"></div><div class="a" style="left:740px;top:127px;width:150px;height:5px;background:#e0401a;opacity:.4"></div><div class="a" style="left:740px;top:142px;width:150px;height:5px;background:#e0401a;opacity:.4"></div><div class="a" style="left:740px;top:157px;width:150px;height:5px;background:#333;opacity:.4"></div><div class="a" style="left:740px;top:245px;width:150px;height:5px;background:#333;opacity:.4"></div><div class="a" style="left:740px;top:260px;width:150px;height:5px;background:#333;opacity:.4"></div><div class="a" style="left:740px;top:275px;width:150px;height:5px;background:#e0401a;opacity:.4"></div><div class="a" style="left:740px;top:290px;width:150px;height:5px;background:#333;opacity:.4"></div><div class="a" style="left:480px;top:82px;width:50px;height:3px;background:#333;opacity:.5"></div><div class="a" style="left:480px;top:247px;width:50px;height:3px;background:#333;opacity:.5"></div></div></div><div class="a" style="left:0;top:764px;width:226px;height:2px;background:#e6e6e6"></div></div>
<!-- slide area scrollbar -->
<div class="a" style="left:1302px;top:138px;width:14px;height:582px;background:#dddddd"></div>
<div class="a" style="left:1302px;top:138px;width:14px;height:14px;background:#fff;border:1px solid #c8c8c8"></div>
<svg class="a" style="left:1305px;top:142px" width="8" height="5"><path d="M0 4.5h7l-3.5-4z" fill="#555"/></svg>
<div class="a" style="left:1302px;top:278px;width:14px;height:41px;background:#fff;border:1px solid #c8c8c8"></div>
<div class="a" style="left:1302px;top:656px;width:14px;height:14px;background:#fff;border:1px solid #c8c8c8"></div>
<svg class="a" style="left:1305px;top:661px" width="8" height="5"><path d="M0 0h7l-3.5 4z" fill="#555"/></svg>
<svg class="a" style="left:1305px;top:674px" width="8" height="24"><path d="M0 5h7l-3.5-4zM0 9h7l-3.5-4z" fill="#666"/><path d="M0 15h7l-3.5 4zM0 19h7l-3.5 4z" fill="#666"/></svg>
<!-- slide -->
<div class="a" style="left:270px;top:147px;width:990px;height:559px;background:#d4d4d4"></div>
<div id="slide" class="a" style="left:271px;top:148px;width:988.5px;height:557.5px;background:#fff;overflow:hidden">
 <!--S4--><svg class="a" style="left:0;top:0" width="988.5" height="557.5" viewBox="0 0 988.5 557.5"><use href="#facet"/></svg><div style="position:absolute;left:42.3px;font-size:42px;font-weight:bold;color:#8bb43a;line-height:50px;white-space:nowrap;letter-spacing:-1.0px;top:36.2px">Understanding the purpose of GI</div><div style="position:absolute;left:42.3px;font-size:42px;font-weight:bold;color:#8bb43a;line-height:50px;white-space:nowrap;letter-spacing:-1.0px;top:85.5px">law.</div><div style="position:absolute;left:90.8px;font-size:20px;font-style:italic;color:#3a3a3a;line-height:24px;white-space:nowrap;letter-spacing:0.78px;top:161.72px">The Preamble of the Act states that it is an Act to provide for <span style="text-decoration:underline;text-underline-offset:3px;text-decoration-thickness:1px">the</span></div><div style="position:absolute;left:90.8px;font-size:20px;font-style:italic;color:#3a3a3a;line-height:24px;white-space:nowrap;letter-spacing:0.78px;top:186.22px"><span style="text-decoration:underline;text-underline-offset:3px;text-decoration-thickness:1px">registration </span>and <span style="text-decoration:underline;text-underline-offset:3px;text-decoration-thickness:1px">better protection of geographical indications </span>relating to</div><div style="position:absolute;left:90.8px;font-size:20px;font-style:italic;color:#3a3a3a;line-height:24px;white-space:nowrap;letter-spacing:0.78px;top:210.82px">goods.</div><svg class="a" style="left:64px;top:291.5px" width="20" height="22"><path d="M0.5 0.5L19.5 11L0.5 21.5z" fill="#8fba3a"/></svg><div class="a" style="left:90.5px;top:282.4px;font-size:32.3px;color:#3a3a3a;line-height:36px;white-space:nowrap;letter-spacing:0.6px">Better protection of GIs, how?</div><div class="a" style="left:62px;top:366.80px;font-size:17px;line-height:24px;color:#93ab4c;letter-spacing:0.5px">i.</div><div style="position:absolute;left:109px;width:681.5px;font-size:20px;line-height:24px;white-space:nowrap;letter-spacing:0.455px;color:#3a3a3a;top:366.80px;text-align:justify;text-align-last:justify;white-space:normal"><span style="color:#c3302b;text-decoration:underline;text-underline-offset:2px;text-decoration-thickness:1px">Help producers of GI goods to fetch premium price </span>owing to the fact that</div><div style="position:absolute;left:109px;width:681.5px;font-size:20px;line-height:24px;white-space:nowrap;letter-spacing:0.455px;color:#3a3a3a;top:390.80px;text-align:justify;text-align-last:justify;white-space:normal">that the product has a reputation of being a high quality product. The</div><div style="position:absolute;left:109px;width:681.5px;font-size:20px;line-height:24px;white-space:nowrap;letter-spacing:0.455px;color:#3a3a3a;top:414.90px;">quality is owing to it’s geographical origin.</div><div class="a" style="left:62px;top:450.20px;font-size:17px;line-height:24px;color:#93ab4c;letter-spacing:0.5px">ii.</div><div style="position:absolute;left:109px;width:681.5px;font-size:20px;line-height:24px;white-space:nowrap;letter-spacing:0.455px;color:#3a3a3a;top:450.20px;">Helps consumer to <span style="color:#c3302b;text-decoration:underline;text-underline-offset:2px;text-decoration-thickness:1px">identify genuine </span>high quality origin based product</div><div class="a" style="left:62px;top:485.30px;font-size:17px;line-height:24px;color:#93ab4c;letter-spacing:0.5px">iii.</div><div style="position:absolute;left:109px;width:681.5px;font-size:20px;line-height:24px;white-space:nowrap;letter-spacing:0.455px;color:#3a3a3a;top:485.30px;text-align:justify;text-align-last:justify;white-space:normal">Can lead to socio-economic development of the producers of the GI</div><div style="position:absolute;left:109px;width:681.5px;font-size:20px;line-height:24px;white-space:nowrap;letter-spacing:0.455px;color:#3a3a3a;top:509.80px;">product.</div><svg class="a" style="left:699px;top:369px" width="7" height="14"><path d="M0.5 0.5h2l1 1 1-1h2M3.5 1.5v11M0.5 13.5h2l1-1 1 1h2" fill="none" stroke="#222" stroke-width="1"/></svg><!--/S4-->
</div>
<!-- notes -->
<div class="a" style="left:228px;top:721px;width:1089px;height:1px;background:#c6c6c6"></div>
<div class="rt" style="left:237.5px;top:728.8px;font-size:13.4px;color:#5f5f5f">Click to add notes</div>
<!-- status bar -->
<div class="a" style="left:0;top:766px;width:1317px;height:19px;background:#f1f1f1"></div>
<div class="rt" style="left:6.5px;top:770.5px;color:#555;font-size:10.4px">Slide 4 of 12</div>
<svg class="a" style="left:83px;top:769px" width="14" height="13" fill="none" stroke="#888" stroke-width="1"><path d="M1.5 2.5h4l2 1v9l-2-1h-4zM7.5 3.5l2-1h1M10 6l3 3M13 6l-3 3"/></svg><div class="rt" style="left:111px;top:770.5px;color:#555;font-size:10.4px">English (India)</div>
<!-- status bar right -->
<svg class="a" style="left:853px;top:770px" width="14" height="12"><path d="M2 6h9M2 8.5h9M2 11h9" stroke="#777" stroke-width="1"/><path d="M4 4l2.5-3 2.5 3z" fill="#777"/></svg>
<div class="rt" style="left:870px;top:770.5px;color:#555;font-size:10.4px">Notes</div>
<svg class="a" style="left:914px;top:770px" width="14" height="12"><path d="M1 1h11v7H6l-3 3V8H1z" fill="#777"/></svg>
<div class="rt" style="left:931px;top:770.5px;color:#555;font-size:10.4px">Comments</div>
<div class="a" style="left:998px;top:766px;width:34px;height:19px;background:#d4d4d4"></div>
<svg class="a" style="left:1007px;top:769px" width="16" height="13" fill="none" stroke="#777" stroke-width="1"><rect x="1.5" y="1.5" width="13" height="10"/><rect x="5.5" y="3.5" width="7" height="5"/><path d="M3 4v6"/></svg>
<svg class="a" style="left:1042px;top:769px" width="16" height="13" fill="none" stroke="#777" stroke-width="1"><rect x="1.5" y="1.5" width="5" height="4"/><rect x="9.5" y="1.5" width="5" height="4"/><rect x="1.5" y="7.5" width="5" height="4"/><rect x="9.5" y="7.5" width="5" height="4"/></svg>
<svg class="a" style="left:1076px;top:769px" width="16" height="13" fill="none" stroke="#777" stroke-width="1"><path d="M1.5 1.5h6v10h-6zM8.5 1.5h6v10h-6zM3 4h3M3 6h3M3 8h3M10 4h3M10 6h3M10 8h3"/></svg>
<svg class="a" style="left:1111px;top:769px" width="16" height="13" fill="none" stroke="#777" stroke-width="1"><path d="M1 1.5h14M2.5 1.5v6h11v-6M8 7.5v3M5 11.5h6"/></svg>
<div class="a" style="left:1141px;top:775px;width:7px;height:1.5px;background:#555"></div>
<div class="a" style="left:1151px;top:775px;width:90px;height:1px;background:#999"></div>
<div class="a" style="left:1187px;top:770px;width:3px;height:10px;background:#555"></div>
<div class="a" style="left:1246px;top:775px;width:8px;height:1.5px;background:#555"></div>
<div class="a" style="left:1249.3px;top:771.5px;width:1.5px;height:8px;background:#555"></div>
<div class="rt" style="left:1266px;top:770.5px;color:#555;font-size:10.4px">85%</div>
<svg class="a" style="left:1298px;top:769px" width="14" height="13" fill="none" stroke="#777" stroke-width="1"><rect x="1.5" y="1.5" width="11" height="10"/><path d="M3 3l3 3M11 3l-3 3M3 10l3-3M11 10l-3-3"/></svg>

</div>

<div class="tile" style="left:1395px;top:64px"><div class="a" style="left:0;top:0;width:162px;height:121px;border-radius:8px;background:#8ab4f8"></div>
<div class="a" style="left:4px;top:4px;width:154px;height:113px;border-radius:4px;overflow:hidden;background:linear-gradient(90deg,#f5efdc 0,#f0e8d2 27px,#d3ccb8 31px,#d6cfba 37px,#e3e5e4 38px,#dfe2e2 84px,#8e8f8c 85px,#95958f 91px,#d9d4c6 92px,#d4cfc2 154px)">
 <div class="a" style="left:92px;top:58px;width:62px;height:55px;background:linear-gradient(180deg,#8c8d8a 0,#8c8d8a 3px,#a9aaa6 4px,#a4a5a1 40px,#7a7b78 42px,#b7b6b0 50px)"></div>
 <div class="a" style="left:23px;top:17px;width:99px;height:110px;border-radius:50px 50px 12px 12px;background:#2f2a2a"></div>
 <div class="a" style="left:40px;top:22px;width:63px;height:100px;border-radius:32px 32px 30px 30px;background:radial-gradient(ellipse at 50% 55%,#c09a88 0,#b08878 45%,#8f6a5c 100%)"></div>
 <div class="a" style="left:40px;top:49px;width:28px;height:21px;border-radius:9px 9px 12px 12px;background:#8f90d8;border:3px solid #2a2530"></div>
 <div class="a" style="left:75px;top:45px;width:25px;height:20px;border-radius:9px 9px 12px 12px;background:#9495da;border:3px solid #2a2530"></div>
 <div class="a" style="left:66px;top:55px;width:10px;height:3px;background:#2a2530"></div>
 <div class="a" style="left:62px;top:78px;width:28px;height:8px;border-radius:8px;background:#6e4742"></div>
 <div class="a" style="left:125px;top:100px;width:29px;height:13px;background:#6a4a5a"></div>
</div>
<div class="a" style="left:128px;top:8px;width:26px;height:26px;border-radius:50%;background:#1a73e8"><svg width="26" height="26"><rect x="7" y="11" width="3.4" height="4.5" rx="1.7" fill="#fff"/><rect x="11.3" y="8.5" width="3.4" height="9" rx="1.7" fill="#fff"/><rect x="15.6" y="11" width="3.4" height="4.5" rx="1.7" fill="#fff"/></svg></div><div class="tname" style="left:16.5px;bottom:17.5px">Jupi Gogoi</div></div>
<div class="tile" style="left:1569px;top:64px"><div class="av" style="left:56px;top:35px;width:50px;height:50px;line-height:50px;background:#5c6bc0">S</div><div class="mute"><svg width="26" height="26" viewBox="0 0 26 26"><rect x="10.4" y="6" width="5.4" height="9.5" rx="2.7" fill="#fff"/><path d="M8.4 13.6a4.6 4.6 0 0 0 9.2 0" fill="none" stroke="#fff" stroke-width="1.6"/><rect x="12.2" y="17.8" width="1.7" height="3" fill="#fff"/><path d="M6.9 8.2l12 12" stroke="#333437" stroke-width="3.2"/><path d="M6.9 8.2l12 12" stroke="#fff" stroke-width="1.5" stroke-linecap="round"/></svg></div><div class="tname">Sharmistha Baruah</div></div>
<div class="tile" style="left:1743px;top:64px"><div class="av" style="left:55.5px;top:35.5px;width:50px;height:50px;overflow:hidden;background:#36373a"><svg width="50" height="50" viewBox="0 0 50 50"><circle cx="25" cy="25" r="24" fill="#4a4440"/><circle cx="25" cy="22.5" r="21" fill="#c9742c"/><circle cx="25" cy="22.5" r="17.5" fill="#f0b43c"/><circle cx="25" cy="22.5" r="14" fill="#f6c047"/><circle cx="25" cy="13" r="4.5" fill="#45b39c"/><circle cx="25" cy="13" r="2" fill="#8fe0d0"/><path d="M25 19v15M17 21.5h16M17.5 21.5l-3.5 6.5h7zM32.5 21.5l-3.5 6.5h7z" stroke="#6a3a1a" stroke-width="1.2" fill="none"/><path d="M10 33c7 7 23 7 30 0l2 4.5c-9 8-25 8-34 0z" fill="#6b2a3c"/><rect x="12" y="42" width="26" height="7" fill="#2b2125"/><text x="13.5" y="48" font-size="6.5" fill="#f0e0e0" font-family="Liberation Sans" font-weight="bold">NLUJA</text></svg></div><div class="mute"><svg width="26" height="26" viewBox="0 0 26 26"><rect x="10.4" y="6" width="5.4" height="9.5" rx="2.7" fill="#fff"/><path d="M8.4 13.6a4.6 4.6 0 0 0 9.2 0" fill="none" stroke="#fff" stroke-width="1.6"/><rect x="12.2" y="17.8" width="1.7" height="3" fill="#fff"/><path d="M6.9 8.2l12 12" stroke="#333437" stroke-width="3.2"/><path d="M6.9 8.2l12 12" stroke="#fff" stroke-width="1.5" stroke-linecap="round"/></svg></div><div class="tname">National Law Unive...</div></div>
<div class="tile" style="left:1395px;top:197px"><div class="av" style="left:56px;top:35px;width:50px;height:50px;line-height:50px;background:#0b5cad">S</div><div class="mute"><svg width="26" height="26" viewBox="0 0 26 26"><rect x="10.4" y="6" width="5.4" height="9.5" rx="2.7" fill="#fff"/><path d="M8.4 13.6a4.6 4.6 0 0 0 9.2 0" fill="none" stroke="#fff" stroke-width="1.6"/><rect x="12.2" y="17.8" width="1.7" height="3" fill="#fff"/><path d="M6.9 8.2l12 12" stroke="#333437" stroke-width="3.2"/><path d="M6.9 8.2l12 12" stroke="#fff" stroke-width="1.5" stroke-linecap="round"/></svg></div><div class="tname">Saurav Baishya</div></div>
<div class="tile" style="left:1569px;top:197px"><div class="av" style="left:56.5px;top:35.5px;width:49px;height:49px;overflow:hidden;background:#ededed"><svg width="49" height="49" viewBox="0 0 49 49"><path d="M9.5 21c-1-12 6-18 15-18s15 5 14 18l-3-6c-3-3-8-4-11-4s-9 1-12 4z" fill="#5a5a5a"/><ellipse cx="24.5" cy="26" rx="13" ry="16" fill="#e2e2e2"/><path d="M12 14c4-4 20-4 25 0v-3c-5-5-20-5-25 0z" fill="#6a6a6a"/><circle cx="18" cy="22.5" r="1.6" fill="#777"/><circle cx="31" cy="22.5" r="1.6" fill="#777"/><path d="M24 24v6" stroke="#bbb" stroke-width="1.2"/><path d="M19 33.5c3-2 8-2 11 0" stroke="#555" stroke-width="2.2" fill="none"/><path d="M10 49c2-6 8-8 14.5-8s12.5 2 14.5 8z" fill="#f6f6f6"/></svg></div><div class="mute"><svg width="26" height="26" viewBox="0 0 26 26"><rect x="10.4" y="6" width="5.4" height="9.5" rx="2.7" fill="#fff"/><path d="M8.4 13.6a4.6 4.6 0 0 0 9.2 0" fill="none" stroke="#fff" stroke-width="1.6"/><rect x="12.2" y="17.8" width="1.7" height="3" fill="#fff"/><path d="M6.9 8.2l12 12" stroke="#333437" stroke-width="3.2"/><path d="M6.9 8.2l12 12" stroke="#fff" stroke-width="1.5" stroke-linecap="round"/></svg></div><div class="tname">Bijan Kumar Sarma</div></div>
<div class="tile" style="left:1743px;top:197px"><div class="av" style="left:56px;top:35px;width:50px;height:50px;background:#fff;border:2px solid #111"><svg class="a" style="left:0;top:0" width="46" height="46"><circle cx="23" cy="23" r="20" fill="none" stroke="#111" stroke-width="1.5"/><path d="M12 10L23 36L34 10" fill="none" stroke="#111" stroke-width="3"/><path d="M13 38L23 12L33 38M16 28h14" fill="none" stroke="#e01b1b" stroke-width="3"/><text x="19" y="12" font-size="9" fill="#111" font-family="Liberation Sans">S</text><text x="19" y="43" font-size="9" fill="#111" font-family="Liberation Sans">U</text></svg></div><div class="mute"><svg width="26" height="26" viewBox="0 0 26 26"><rect x="10.4" y="6" width="5.4" height="9.5" rx="2.7" fill="#fff"/><path d="M8.4 13.6a4.6 4.6 0 0 0 9.2 0" fill="none" stroke="#fff" stroke-width="1.6"/><rect x="12.2" y="17.8" width="1.7" height="3" fill="#fff"/><path d="M6.9 8.2l12 12" stroke="#333437" stroke-width="3.2"/><path d="M6.9 8.2l12 12" stroke="#fff" stroke-width="1.5" stroke-linecap="round"/></svg></div><div class="tname">vasu ngo</div></div>
<div class="tile" style="left:1395px;top:330px"><div class="av" style="left:56px;top:35px;width:50px;height:50px;line-height:50px;background:#2d7d32">S</div><div class="mute"><svg width="26" height="26" viewBox="0 0 26 26"><rect x="10.4" y="6" width="5.4" height="9.5" rx="2.7" fill="#fff"/><path d="M8.4 13.6a4.6 4.6 0 0 0 9.2 0" fill="none" stroke="#fff" stroke-width="1.6"/><rect x="12.2" y="17.8" width="1.7" height="3" fill="#fff"/><path d="M6.9 8.2l12 12" stroke="#333437" stroke-width="3.2"/><path d="M6.9 8.2l12 12" stroke="#fff" stroke-width="1.5" stroke-linecap="round"/></svg></div><div class="tname">S Singh Advocate</div></div>
<div class="tile" style="left:1569px;top:330px"><div class="av" style="left:56px;top:35px;width:50px;height:50px;line-height:50px;background:#ab47bc">T</div><div class="mute"><svg width="26" height="26" viewBox="0 0 26 26"><rect x="10.4" y="6" width="5.4" height="9.5" rx="2.7" fill="#fff"/><path d="M8.4 13.6a4.6 4.6 0 0 0 9.2 0" fill="none" stroke="#fff" stroke-width="1.6"/><rect x="12.2" y="17.8" width="1.7" height="3" fill="#fff"/><path d="M6.9 8.2l12 12" stroke="#333437" stroke-width="3.2"/><path d="M6.9 8.2l12 12" stroke="#fff" stroke-width="1.5" stroke-linecap="round"/></svg></div><div class="tname">Topi Basar</div></div>
<div class="tile" style="left:1743px;top:330px"><div class="av" style="left:56px;top:35px;width:50px;height:50px;line-height:50px;background:#0288d1">V</div><div class="mute"><svg width="26" height="26" viewBox="0 0 26 26"><rect x="10.4" y="6" width="5.4" height="9.5" rx="2.7" fill="#fff"/><path d="M8.4 13.6a4.6 4.6 0 0 0 9.2 0" fill="none" stroke="#fff" stroke-width="1.6"/><rect x="12.2" y="17.8" width="1.7" height="3" fill="#fff"/><path d="M6.9 8.2l12 12" stroke="#333437" stroke-width="3.2"/><path d="M6.9 8.2l12 12" stroke="#fff" stroke-width="1.5" stroke-linecap="round"/></svg></div><div class="tname">Vice Chancellor</div></div>
<div class="tile" style="left:1395px;top:463px"><div class="av" style="left:56px;top:36px;width:49px;height:49px;overflow:hidden;background:#161012"><svg width="49" height="49" viewBox="0 0 49 49"><ellipse cx="24" cy="30" rx="15" ry="19" fill="#1e1414"/><ellipse cx="24.5" cy="27" rx="11.5" ry="15" fill="#a4644c"/><ellipse cx="24" cy="22" rx="8" ry="7" fill="#b47458"/><path d="M14 20c0-4 5-10 11-10s10 5 10 10c-3-3-6-5-10-5s-8 2-11 5z" fill="#1e1414"/><path d="M17 22h5M27 22h5" stroke="#3a2018" stroke-width="1.3"/><path d="M19 33c3 2 8 2 11 0" stroke="#6a3028" stroke-width="1.4" fill="none"/><rect x="14" y="45" width="22" height="4" fill="#a02818"/></svg></div><div class="mute"><svg width="26" height="26" viewBox="0 0 26 26"><rect x="10.4" y="6" width="5.4" height="9.5" rx="2.7" fill="#fff"/><path d="M8.4 13.6a4.6 4.6 0 0 0 9.2 0" fill="none" stroke="#fff" stroke-width="1.6"/><rect x="12.2" y="17.8" width="1.7" height="3" fill="#fff"/><path d="M6.9 8.2l12 12" stroke="#333437" stroke-width="3.2"/><path d="M6.9 8.2l12 12" stroke="#fff" stroke-width="1.5" stroke-linecap="round"/></svg></div><div class="tname">Dr Shakuntla Sang...</div></div>
<div class="tile" style="left:1569px;top:463px"><div class="av" style="left:56.5px;top:36px;width:49px;height:49px;overflow:hidden;background:#d5dadc"><svg width="49" height="49" viewBox="0 0 49 49"><rect x="36" y="24" width="13" height="12" fill="#2a3550"/><path d="M8 49V32c2-6 8-8 16-8s13 2 15 8v17z" fill="#d01e6e"/><path d="M28 25l6 24h-4l-5-24z" fill="#f04a90"/><ellipse cx="21" cy="15" rx="5" ry="6.5" fill="#b07a62"/><path d="M15.5 14c0-6 3-8 6-8s5 2 5 6c-2-2-5-3-7-2s-3 3-4 4z" fill="#241c1c"/><circle cx="21" cy="11.5" r="0.8" fill="#c02020"/><path d="M10 38l10-6 6 8-10 5z" fill="#262626"/><path d="M6 45h40v4H6z" fill="#f2f2f2"/><path d="M22 40h12l-2 5H24z" fill="#333"/></svg></div><div class="mute"><svg width="26" height="26" viewBox="0 0 26 26"><rect x="10.4" y="6" width="5.4" height="9.5" rx="2.7" fill="#fff"/><path d="M8.4 13.6a4.6 4.6 0 0 0 9.2 0" fill="none" stroke="#fff" stroke-width="1.6"/><rect x="12.2" y="17.8" width="1.7" height="3" fill="#fff"/><path d="M6.9 8.2l12 12" stroke="#333437" stroke-width="3.2"/><path d="M6.9 8.2l12 12" stroke="#fff" stroke-width="1.5" stroke-linecap="round"/></svg></div><div class="tname">nandaranic</div></div>
<div class="tile" style="left:1743px;top:463px"><div class="av" style="left:56px;top:35px;width:50px;height:50px;line-height:50px;background:#78909c">R</div><div class="mute"><svg width="26" height="26" viewBox="0 0 26 26"><rect x="10.4" y="6" width="5.4" height="9.5" rx="2.7" fill="#fff"/><path d="M8.4 13.6a4.6 4.6 0 0 0 9.2 0" fill="none" stroke="#fff" stroke-width="1.6"/><rect x="12.2" y="17.8" width="1.7" height="3" fill="#fff"/><path d="M6.9 8.2l12 12" stroke="#333437" stroke-width="3.2"/><path d="M6.9 8.2l12 12" stroke="#fff" stroke-width="1.5" stroke-linecap="round"/></svg></div><div class="tname">Registrar</div></div>
<div class="tile" style="left:1395px;top:596px"><div class="av" style="left:56px;top:35px;width:50px;height:50px;line-height:50px;background:#c1401b">D</div><div class="mute"><svg width="26" height="26" viewBox="0 0 26 26"><rect x="10.4" y="6" width="5.4" height="9.5" rx="2.7" fill="#fff"/><path d="M8.4 13.6a4.6 4.6 0 0 0 9.2 0" fill="none" stroke="#fff" stroke-width="1.6"/><rect x="12.2" y="17.8" width="1.7" height="3" fill="#fff"/><path d="M6.9 8.2l12 12" stroke="#333437" stroke-width="3.2"/><path d="M6.9 8.2l12 12" stroke="#fff" stroke-width="1.5" stroke-linecap="round"/></svg></div><div class="tname">Dolly Kumar</div></div>
<div class="tile" style="left:1569px;top:596px"><div class="av" style="left:56px;top:35px;width:50px;height:50px;line-height:50px;background:#00897b">S</div><div class="mute"><svg width="26" height="26" viewBox="0 0 26 26"><rect x="10.4" y="6" width="5.4" height="9.5" rx="2.7" fill="#fff"/><path d="M8.4 13.6a4.6 4.6 0 0 0 9.2 0" fill="none" stroke="#fff" stroke-width="1.6"/><rect x="12.2" y="17.8" width="1.7" height="3" fill="#fff"/><path d="M6.9 8.2l12 12" stroke="#333437" stroke-width="3.2"/><path d="M6.9 8.2l12 12" stroke="#fff" stroke-width="1.5" stroke-linecap="round"/></svg></div><div class="tname">System Administra...</div></div>
<div class="tile" style="left:1743px;top:596px"><div class="av" style="left:51px;top:30px;width:32px;height:32px;overflow:hidden;background:#fafafa"><svg width="32" height="32" viewBox="0 0 32 32"><path d="M5 32c1-7 6-9 11-9s10 2 11 9z" fill="#262a34"/><path d="M14 23l2 9 2-9z" fill="#c0282a"/><path d="M13 23l3 3 3-3" fill="#fff"/><ellipse cx="16" cy="14.5" rx="5.5" ry="7" fill="#9a6048"/><path d="M10 13c0-5 3-7 6-7s6 2 6 7c-1-2-3-3-6-3s-5 1-6 3z" fill="#1a1414"/></svg></div><div class="av" style="left:81px;top:30px;width:32px;height:32px;overflow:hidden;background:#a8c4c8;border:1px solid #d8e4e4"><svg width="30" height="30" viewBox="0 0 30 30"><path d="M5 30c1-8 5-11 10-11s9 3 10 11z" fill="#e8c8a0"/><ellipse cx="15" cy="13" rx="6" ry="7.5" fill="#e2b896"/><path d="M8 14c0-7 3-10 7-10s8 3 7 10c0 4 2 8 2 12h-4c0-3 1-8-1-12-2 1-6 1-8 0-1 4 0 9-1 12H6c0-4 2-8 2-12z" fill="#c89a60"/><path d="M17 15l6 4-2 3-6-4z" fill="#f0d0b0"/></svg></div><div class="a" style="left:0;top:74px;width:162px;text-align:center;color:#fff;font-size:14px">56 others</div></div>
<div class="tile" style="left:1542px;top:729px;width:215px;height:120px"><div class="av" style="left:75px;top:29px;width:64px;height:64px;line-height:64px;font-size:34px;background:#455a64">S</div><div class="mute"><svg width="26" height="26" viewBox="0 0 26 26"><rect x="10.4" y="6" width="5.4" height="9.5" rx="2.7" fill="#fff"/><path d="M8.4 13.6a4.6 4.6 0 0 0 9.2 0" fill="none" stroke="#fff" stroke-width="1.6"/><rect x="12.2" y="17.8" width="1.7" height="3" fill="#fff"/><path d="M6.9 8.2l12 12" stroke="#333437" stroke-width="3.2"/><path d="M6.9 8.2l12 12" stroke="#fff" stroke-width="1.5" stroke-linecap="round"/></svg></div><div class="tname">You</div></div>

<div class="a" style="left:24px;top:881px;color:#fff;font-size:16px;font-weight:bold;letter-spacing:-0.4px">1:32 PM</div>
<div class="a" style="left:93px;top:882px;width:1px;height:16px;background:#9aa0a6"></div>
<div class="a" style="left:107px;top:881px;color:#fff;font-size:16px;font-weight:bold;letter-spacing:-0.22px">Regional Convention On Exploring the Intellectual P...</div>
<div class="a" style="left:773px;top:869px;width:40px;height:40px;border-radius:50%;background:#ea4335"><svg width="40" height="40" viewBox="0 0 40 40"><g fill="none" stroke="#fff" stroke-width="2" stroke-linecap="round"><path d="M20 12.5a2.6 2.6 0 0 1 2.6 2.6v4.6a2.6 2.6 0 0 1-5.2 0v-4.6a2.6 2.6 0 0 1 2.6-2.6z" fill="#fff" stroke="none"/><path d="M15 20a5 5 0 0 0 10 0"/><path d="M20 25v3"/><path d="M13.5 13.5l13 13" stroke="#ea4335" stroke-width="3.5"/><path d="M13.5 13.5l13 13"/></g></svg></div>
<div class="a" style="left:825px;top:869px;width:40px;height:40px;border-radius:50%;background:#ea4335"><svg width="40" height="40" viewBox="0 0 40 40"><g fill="none" stroke="#fff" stroke-width="2"><path d="M13 14.5h11v11h-11z"/><path d="M24 18.5l4-3v9l-4-3" fill="#fff"/><path d="M12 12l15 15" stroke="#ea4335" stroke-width="3.5"/><path d="M12 12l15 15" stroke-linecap="round"/></g></svg></div>
<div class="a" style="left:877px;top:869px;width:40px;height:40px;border-radius:50%;background:#3c4043"><svg width="40" height="40" viewBox="0 0 40 40"><rect x="12" y="13.5" width="16" height="12" fill="none" stroke="#fff" stroke-width="2"/><path d="M18.5 17.5h-3v4h3M24.5 17.5h-3v4h3" fill="none" stroke="#fff" stroke-width="1.6"/></svg></div>
<div class="a" style="left:929px;top:869px;width:40px;height:40px;border-radius:50%;background:#3c4043"><svg width="40" height="40" viewBox="0 0 40 40"><path d="M15 23v-8.5a1.3 1.3 0 0 1 2.6 0V20M17.6 20v-8a1.3 1.3 0 0 1 2.6 0v8M20.2 20v-7.5a1.3 1.3 0 0 1 2.6 0V20M22.8 20v-6a1.3 1.3 0 0 1 2.6 0v9c0 3.5-2.5 6-5.5 6s-4.5-1.5-6-4l-2-3.5a1.2 1.2 0 0 1 2-1.3L15 23" fill="none" stroke="#fff" stroke-width="1.6" stroke-linejoin="round"/></svg></div>
<div class="a" style="left:981px;top:869px;width:40px;height:40px;border-radius:50%;background:#3c4043"><svg width="40" height="40" viewBox="0 0 40 40"><rect x="11.5" y="13" width="17" height="14" fill="none" stroke="#fff" stroke-width="2"/><path d="M20 16.5l-3.2 3.3h2.1v3.2h2.2v-3.2h2.1z" fill="#fff"/></svg></div>
<div class="a" style="left:1033px;top:869px;width:40px;height:40px;border-radius:50%;background:#3c4043"><svg width="40" height="40"><circle cx="20" cy="13.5" r="2" fill="#fff"/><circle cx="20" cy="20" r="2" fill="#fff"/><circle cx="20" cy="26.5" r="2" fill="#fff"/></svg></div>
<div class="a" style="left:1085px;top:869px;width:56px;height:40px;border-radius:20px;background:#ea4335"><svg width="56" height="40" viewBox="0 0 56 40"><path d="M28 17.5c-4.5 0-8 1.3-9.8 2.8-.5.4-.5 1.1 0 1.6l1.5 1.5c.4.4 1 .4 1.5.1l2.2-1.5c.3-.2.5-.5.5-.9v-1.4c1.3-.4 2.7-.6 4.1-.6s2.8.2 4.1.6v1.4c0 .4.2.7.5.9l2.2 1.5c.5.3 1.1.3 1.5-.1l1.5-1.5c.5-.5.5-1.2 0-1.6-1.8-1.5-5.3-2.8-9.8-2.8z" fill="#fff"/></svg></div>
<div class="a" style="left:1674px;top:876px"><svg width="24" height="24" viewBox="0 0 24 24"><circle cx="12" cy="12" r="9" fill="none" stroke="#fff" stroke-width="2"/><rect x="11" y="10.5" width="2" height="6" fill="#fff"/><rect x="11" y="7" width="2" height="2" fill="#fff"/></svg></div>
<div class="a" style="left:1722px;top:876px"><svg width="24" height="24" viewBox="0 0 24 24"><circle cx="9" cy="8.5" r="3" fill="none" stroke="#fff" stroke-width="2"/><path d="M3 19v-1.5c0-2 3-3.5 6-3.5s6 1.5 6 3.5V19z" fill="none" stroke="#fff" stroke-width="2"/><path d="M15 5.6a3 3 0 0 1 0 5.8M17.5 14.3c1.8.6 3.5 1.6 3.5 3.2V19" fill="none" stroke="#fff" stroke-width="2"/></svg></div>
<div class="a" style="left:1733px;top:859px;width:24px;height:22px;border-radius:11px;background:#5f6368;color:#fff;font-size:11px;font-weight:bold;text-align:center;line-height:22px">72</div>
<div class="a" style="left:1770px;top:876px"><svg width="24" height="24" viewBox="0 0 24 24"><path d="M3.5 3.5h17v13h-14l-3 3z" fill="none" stroke="#fff" stroke-width="2" stroke-linejoin="round"/><path d="M7 7.5h10M7 10h10M7 12.5h7" stroke="#fff" stroke-width="1.6"/></svg></div>
<div class="a" style="left:1818px;top:876px"><svg width="24" height="24" viewBox="0 0 24 24"><path d="M12 3l4 6.5H8z" fill="none" stroke="#fff" stroke-width="2" stroke-linejoin="round"/><rect x="4" y="13" width="7" height="7" fill="#fff"/><circle cx="16.5" cy="16.5" r="3.5" fill="none" stroke="#fff" stroke-width="2"/></svg></div>
<div class="a" style="left:1866px;top:876px"><svg width="24" height="24" viewBox="0 0 24 24"><path d="M12 2.5l7.5 3.2v5.3c0 4.8-3.2 9-7.5 10.5-4.3-1.5-7.5-5.7-7.5-10.5V5.7z" fill="none" stroke="#fff" stroke-width="2" stroke-linejoin="round"/><rect x="9" y="11" width="6" height="5" fill="#fff"/><path d="M10.3 11V9.5a1.7 1.7 0 0 1 3.4 0V11" fill="none" stroke="#fff" stroke-width="1.3"/></svg></div>
</body></html>
